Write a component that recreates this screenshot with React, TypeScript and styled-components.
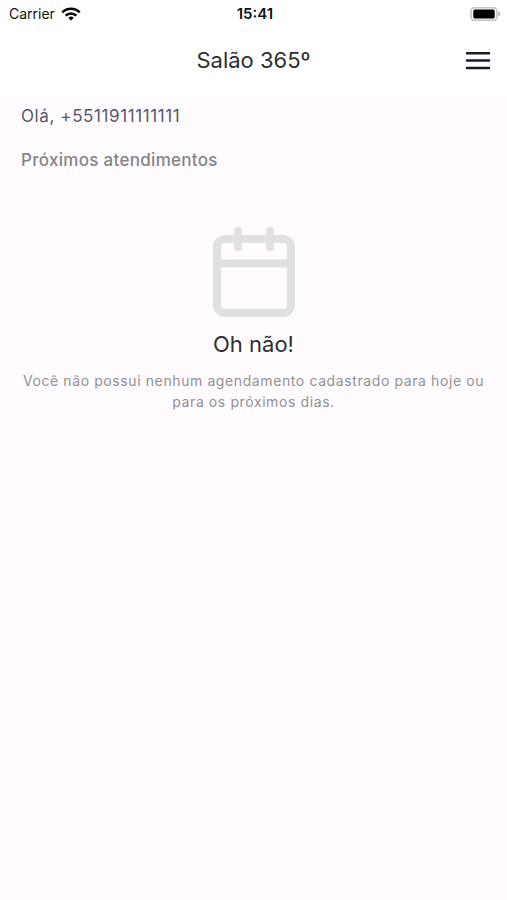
import React from "react";
import styled, { createGlobalStyle } from "styled-components";

const GlobalStyle = createGlobalStyle`
  * { box-sizing: border-box; }
  body {
    margin: 0;
    background: #fffbff;
    font-family: Inter, "Liberation Sans", sans-serif;
  }
`;

const Screen = styled.div`
  min-height: 100vh;
  background: #fffbff;
`;

const Top = styled.div`
  background: #ffffff;
`;

const StatusBar = styled.div`
  display: grid;
  grid-template-columns: 1fr auto 1fr;
  align-items: center;
  height: 28px;
  padding: 0 6px 0 9px;
  font-size: 14px;
  line-height: 20px;
  color: #111111;
`;

const Carrier = styled.div`
  display: flex;
  align-items: center;
  gap: 6px;
`;

const Clock = styled.time`
  font-size: 15px;
  font-weight: 600;
`;

const BatterySlot = styled.div`
  display: flex;
  justify-content: flex-end;
`;

const Header = styled.header`
  display: grid;
  grid-template-columns: 1fr auto 1fr;
  align-items: center;
  height: 68px;
  padding: 0 15px 4px;
`;

const Title = styled.h1`
  grid-column: 2;
  margin: 0;
  font-size: 22px;
  line-height: 28px;
  font-weight: 400;
  color: #2e2e30;
`;

const MenuButton = styled.button`
  justify-self: end;
  display: flex;
  padding: 0;
  border: 0;
  background: none;
  color: #161b2c;
  cursor: pointer;
`;

const Content = styled.main`
  padding: 8px 21px;
`;

const Greeting = styled.p`
  margin: 0;
  font-size: 17px;
  line-height: 24px;
  letter-spacing: 0.6px;
  color: #56586a;
`;

const SectionTitle = styled.h2`
  margin: 20px 0 0;
  font-size: 17px;
  line-height: 24px;
  font-weight: 500;
  letter-spacing: 0.3px;
  color: #858585;
`;

const Empty = styled.section`
  display: flex;
  flex-direction: column;
  align-items: center;
  margin-top: 55px;
  text-align: center;
`;

const EmptyTitle = styled.h3`
  margin: 13px 0 0;
  font-size: 22px;
  line-height: 28px;
  font-weight: 400;
  color: #2e2e30;
`;

const EmptyText = styled.p`
  margin: 12px 0 0;
  font-size: 14px;
  line-height: 21px;
  letter-spacing: 0.6px;
  color: #929292;
`;

const WifiIcon = () => (
  <svg width="20" height="14" viewBox="0 0 20 14" fill="none" stroke="#000" strokeWidth="2.5" aria-hidden="true">
    <path d="M1.3 5.3a12.3 12.3 0 0 1 17.4 0" />
    <path d="M4.6 8.7a7.6 7.6 0 0 1 10.8 0" />
    <path d="M10 13.6 7.3 10.9a3.9 3.9 0 0 1 5.4 0Z" fill="#000" stroke="none" />
  </svg>
);

const BatteryIcon = () => (
  <svg width="31" height="14" viewBox="0 0 31 14" aria-hidden="true">
    <rect x="1" y="0.8" width="26" height="12.6" rx="3.6" fill="#fff" stroke="#c4c4c4" strokeWidth="1.6" />
    <rect x="3.3" y="2.6" width="21.4" height="9" rx="1.6" fill="#000" />
    <path d="M28.4 4.6c2.6 1 2.6 4 0 5Z" fill="#b4b4b4" />
  </svg>
);

const MenuIcon = () => (
  <svg width="28" height="28" viewBox="0 0 28 28" fill="none" stroke="currentColor" strokeWidth="2.5" strokeLinecap="round" aria-hidden="true">
    <path d="M3 7.2h22M3 14.6h22M3 22h22" />
  </svg>
);

const CalendarIcon = () => (
  <svg width="82" height="90" viewBox="0 0 82 90" fill="none" stroke="#e0e0e0" strokeWidth="8" strokeLinecap="round" aria-hidden="true">
    <rect x="4" y="12" width="74" height="74" rx="8" />
    <path d="M4 36.5h74M25 4v16M57 4v16" />
  </svg>
);

export default function App() {
  return (
    <Screen>
      <GlobalStyle />
      <Top>
        <StatusBar>
          <Carrier>Carrier <WifiIcon /></Carrier>
          <Clock>15:41</Clock>
          <BatterySlot><BatteryIcon /></BatterySlot>
        </StatusBar>
        <Header>
          <Title>Salão 365º</Title>
          <MenuButton type="button" aria-label="Menu"><MenuIcon /></MenuButton>
        </Header>
      </Top>
      <Content>
        <Greeting>Olá, +5511911111111</Greeting>
        <SectionTitle>Próximos atendimentos</SectionTitle>
        <Empty>
          <CalendarIcon />
          <EmptyTitle>Oh não!</EmptyTitle>
          <EmptyText>Você não possui nenhum agendamento cadastrado para hoje ou para os próximos dias.</EmptyText>
        </Empty>
      </Content>
    </Screen>
  );
}
